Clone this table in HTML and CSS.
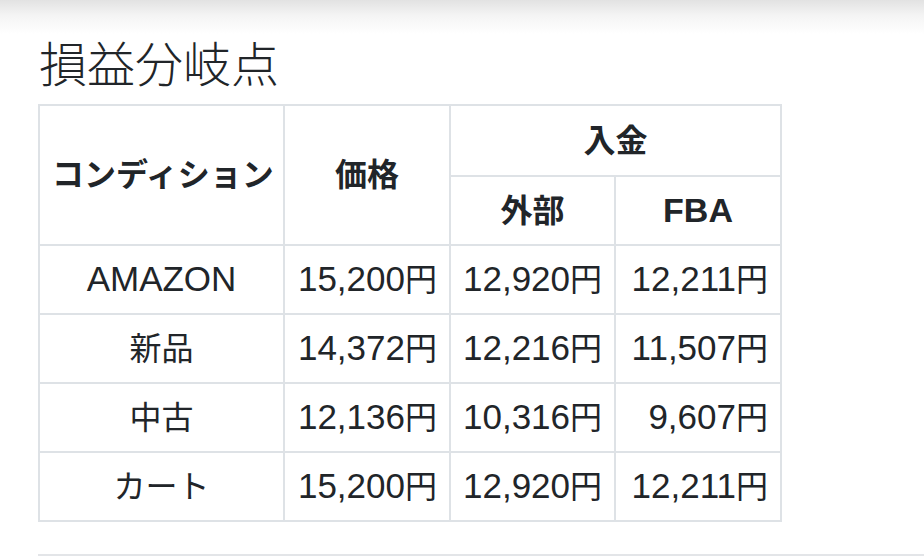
FILE: index.html
```html
<!DOCTYPE html>
<html lang="ja">
<head>
<meta charset="utf-8">
<link rel="stylesheet" href="styles.css">
</head>
<body>
<div class="topshade"></div>
<main class="content">
  <h1 class="title">損益分岐点</h1>
  <table class="grid">
    <colgroup>
      <col class="c1"><col class="c2"><col class="c3"><col class="c4">
    </colgroup>
    <thead>
      <tr class="first">
        <th rowspan="2">コンディション</th>
        <th rowspan="2">価格</th>
        <th colspan="2">入金</th>
      </tr>
      <tr>
        <th>外部</th>
        <th><span class="lat">FBA</span></th>
      </tr>
    </thead>
    <tbody>
      <tr><td class="name"><span class="lat">AMAZON</span></td><td class="num"><span class="lat">15,200</span>円</td><td class="num"><span class="lat">12,920</span>円</td><td class="num"><span class="lat">12,211</span>円</td></tr>
      <tr><td class="name">新品</td><td class="num"><span class="lat">14,372</span>円</td><td class="num"><span class="lat">12,216</span>円</td><td class="num"><span class="lat">11,507</span>円</td></tr>
      <tr><td class="name">中古</td><td class="num"><span class="lat">12,136</span>円</td><td class="num"><span class="lat">10,316</span>円</td><td class="num"><span class="lat">9,607</span>円</td></tr>
      <tr><td class="name">カート</td><td class="num"><span class="lat">15,200</span>円</td><td class="num"><span class="lat">12,920</span>円</td><td class="num"><span class="lat">12,211</span>円</td></tr>
    </tbody>
  </table>
  <hr class="rule">
</main>
</body>
</html>
```

FILE: styles.css
```css
html, body {
  margin: 0;
  padding: 0;
  background: #ffffff;
  color: #212529;
  font-family: "Liberation Sans", "Noto Sans CJK JP", sans-serif;
  overflow: hidden;
}

.topshade {
  height: 34px;
  background: linear-gradient(to bottom, #e2e2e2 0%, #f4f4f4 45%, #ffffff 100%);
}

.content {
  padding-left: 38px;
}

.title {
  margin: 0 0 16px 1px;
  font-family: "Noto Sans CJK JP", sans-serif;
  font-weight: 300;
  font-size: 48px;
  line-height: 54px;
  color: #212529;
}

.grid {
  border-collapse: collapse;
  width: 744px;
  table-layout: fixed;
}

.c1 { width: 245px; }
.c2 { width: 166px; }
.c3 { width: 165px; }
.c4 { width: 166px; }

.grid th,
.grid td {
  border: 2px solid #dee2e6;
  padding: 0 12px;
  height: 69px;
  box-sizing: border-box;
  line-height: 30px;
  font-size: 32px;
  vertical-align: middle;
  white-space: nowrap;
}

.grid .first th {
  height: 71px;
}

.grid th {
  font-weight: 700;
  text-align: center;
}

.grid td.name {
  text-align: center;
  font-weight: 400;
}

.grid td.num {
  text-align: right;
}

.lat {
  font-family: "Liberation Sans", sans-serif;
  font-size: 35px;
  line-height: 30px;
}

.grid th .lat {
  font-size: 34px;
}

.rule {
  margin: 32px 0 0 0;
  border: 0;
  border-top: 2px solid #e3e5e8;
  height: 0;
}
```
